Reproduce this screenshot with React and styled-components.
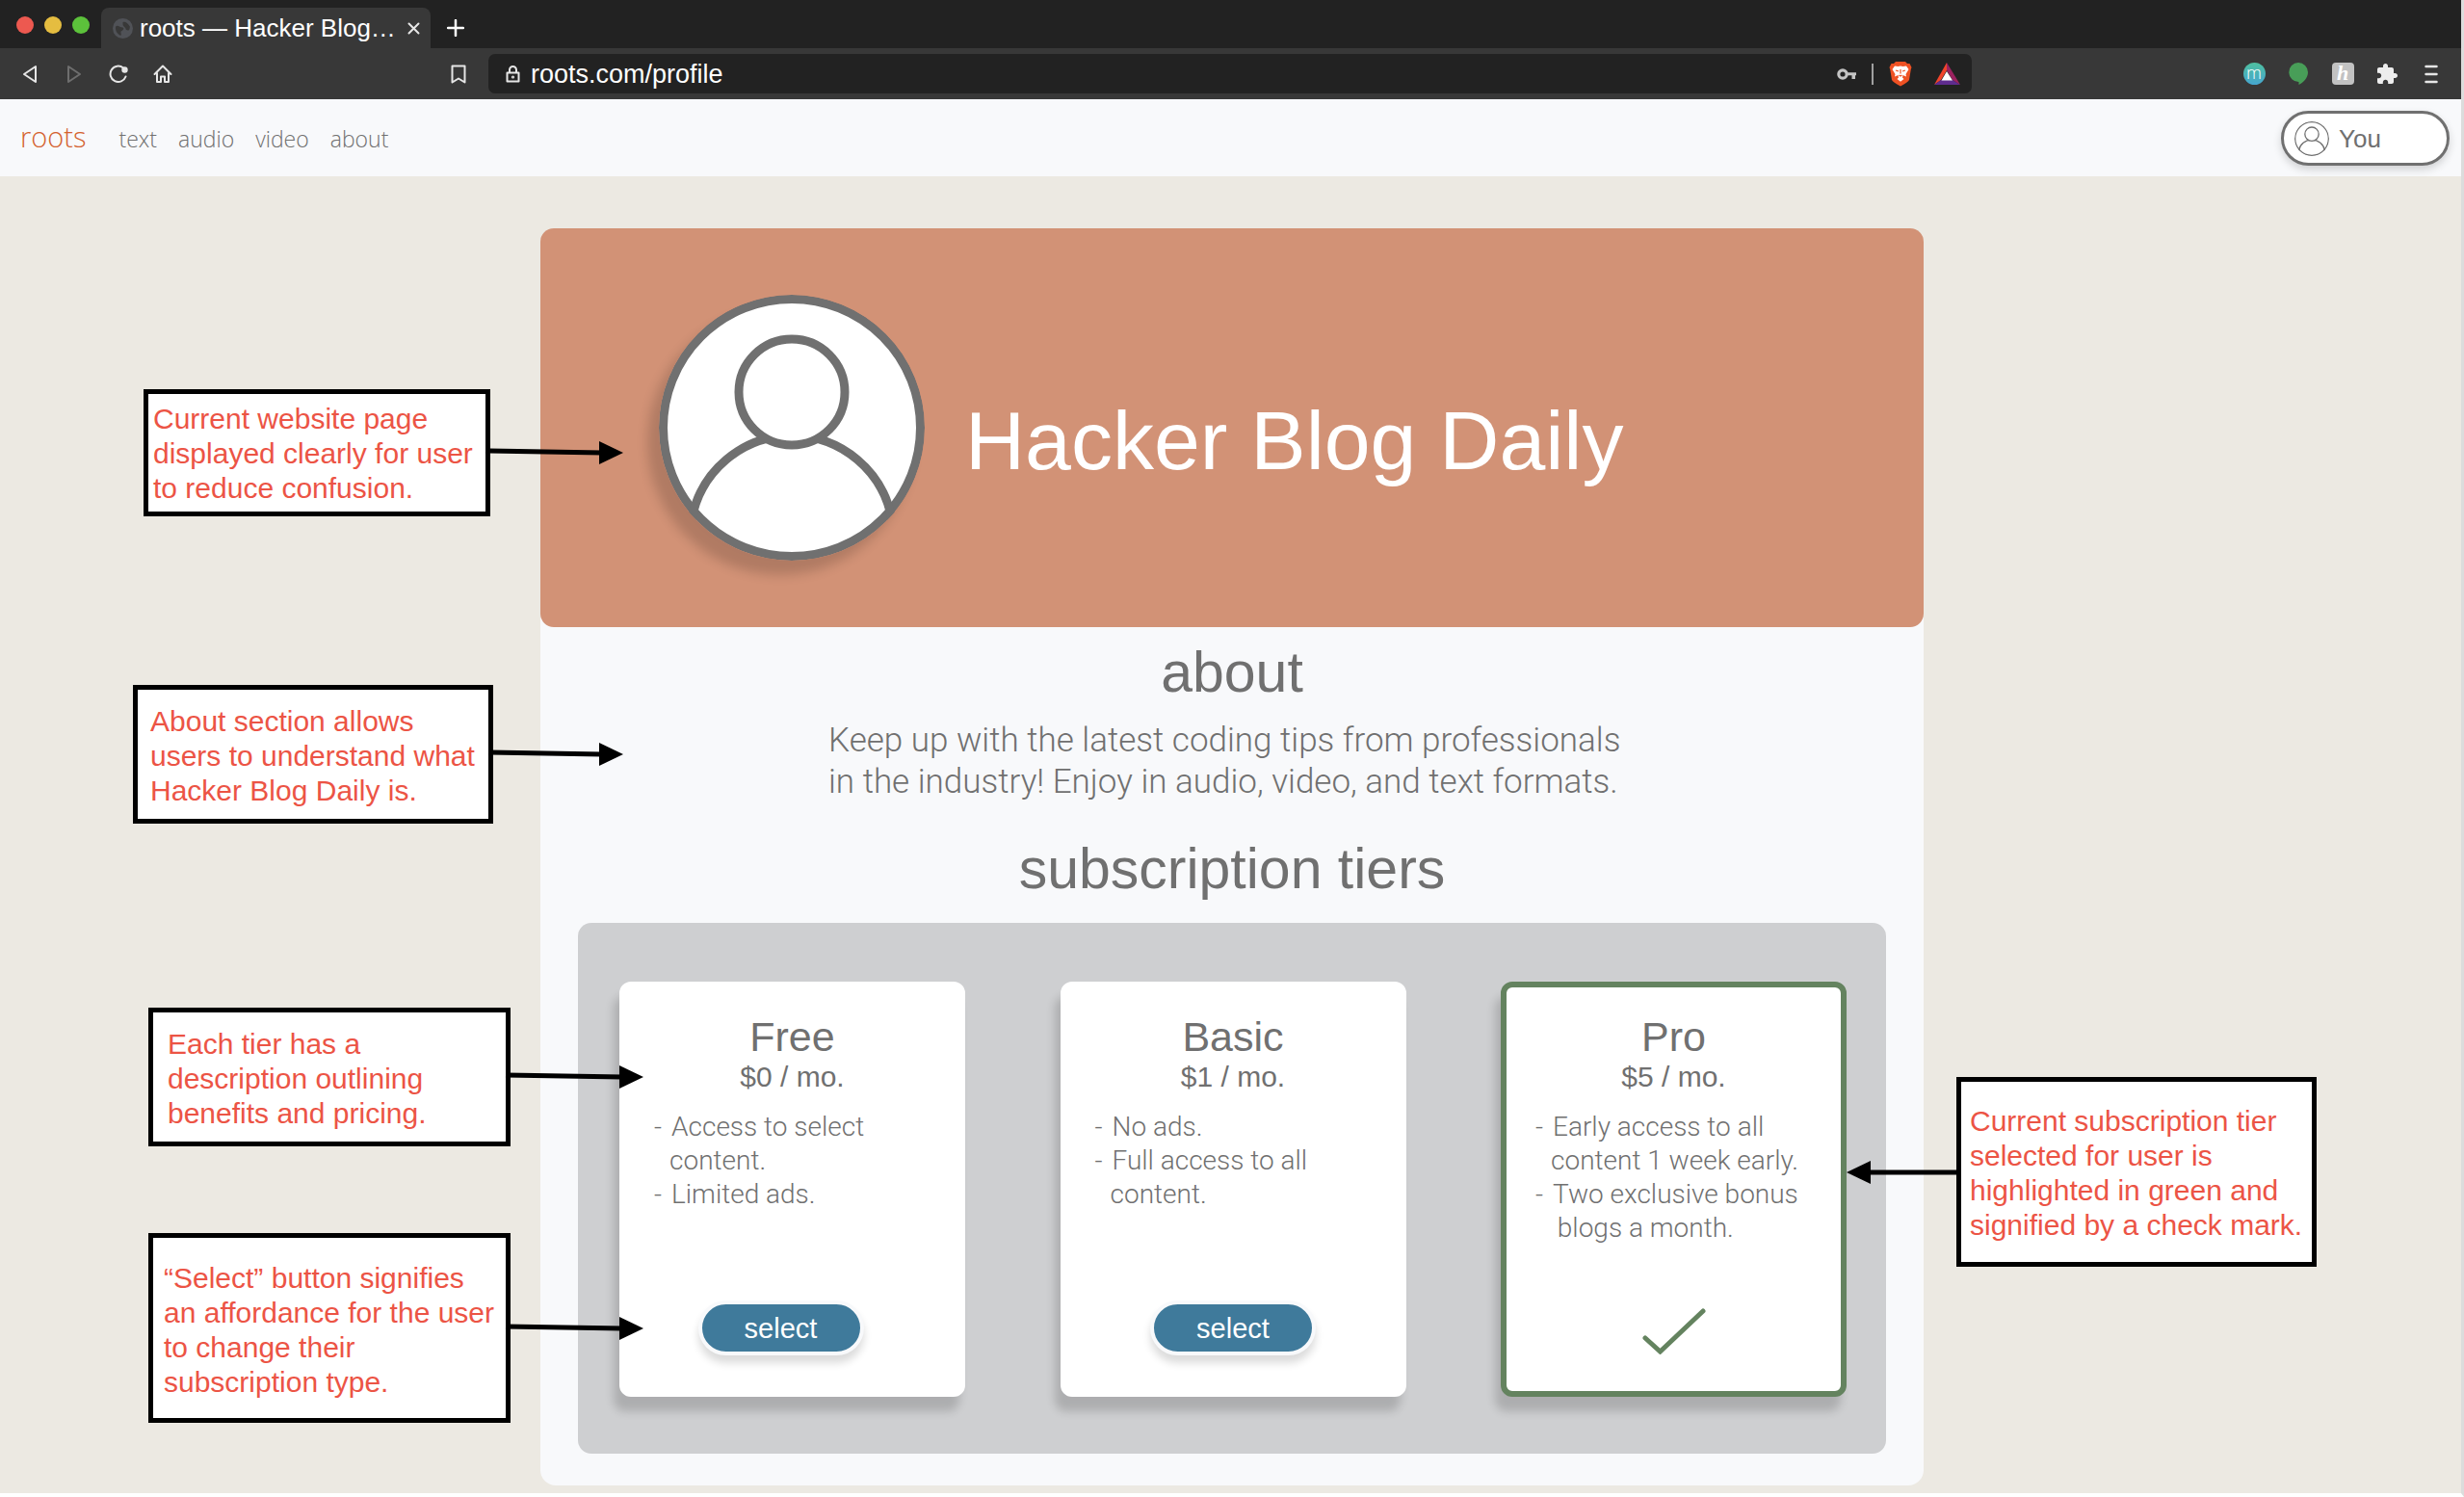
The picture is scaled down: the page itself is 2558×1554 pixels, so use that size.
import React from "react";
import styled, { createGlobalStyle, css } from "styled-components";

const sans = '"Liberation Sans", Arial, sans-serif';
const light = 'Roboto, "Liberation Sans", sans-serif';
const grey = "#707070";

const GlobalStyle = createGlobalStyle`
  *, *::before, *::after { box-sizing: border-box; }
  body { margin: 0; background: #ffffff; font-family: ${sans}; color: ${grey}; }
  h1, h2, h3, p, ul { margin: 0; padding: 0; font-weight: 400; }
  button { font: inherit; padding: 0; border: 0; background: none; cursor: pointer; }
`;

/* ---------- browser window ---------- */

const Window = styled.div`
  border-right: 3px solid #dcdcdc;
  border-bottom: 4px solid #ffffff;
  background: #ece9e2;
  overflow: hidden;
`;

const TabStrip = styled.div`
  display: flex;
  align-items: flex-end;
  height: 50px;
  background: #222222;
`;

const Lights = styled.div`
  display: flex;
  align-items: center;
  gap: 11px;
  width: 105px;
  height: 48px;
  padding-left: 17px;
`;

const Light = styled.button`
  width: 18px;
  height: 18px;
  border-radius: 50%;
  && { background: ${(p) => p.$color}; }
`;

const Tab = styled.div`
  display: flex;
  align-items: center;
  width: 342px;
  height: 42px;
  padding: 0 11px 0 12px;
  border-radius: 8px 8px 0 0;
  background: #383838;
  color: #ffffff;
  font-size: 26px;
  line-height: 32px;
`;

const TabTitle = styled.span`
  flex: 1;
  margin-left: 7px;
  white-space: nowrap;
`;

const TabButton = styled.button`
  display: flex;
  align-items: center;
  justify-content: center;
  width: ${(p) => p.$size}px;
  height: ${(p) => p.$size}px;
`;

const NewTab = styled(TabButton)`
  margin: 0 0 4px 9px;
`;

const Toolbar = styled.div`
  display: grid;
  grid-template-columns: 507px 1fr 508px;
  align-items: center;
  height: 53px;
  background: #383838;
`;

const ToolGroup = styled.div`
  display: flex;
  align-items: center;
  gap: 14px;
  padding: 0 15px;
`;

const ExtensionGroup = styled(ToolGroup)`
  justify-content: flex-end;
`;

const Tool = styled.button`
  display: flex;
  align-items: center;
  justify-content: center;
  width: 32px;
  height: 32px;
  ${(p) => p.$end && css`margin-left: auto;`}
`;

const AddressBar = styled.label`
  display: flex;
  align-items: center;
  height: 41px;
  padding: 0 12px 0 18px;
  border-radius: 7px;
  background: #222222;
`;

const AddressInput = styled.input`
  flex: 1;
  min-width: 0;
  padding: 0 0 0 11px;
  border: 0;
  outline: 0;
  background: none;
  color: #ffffff;
  font-family: ${sans};
  font-size: 27px;
  line-height: 32px;
`;

const AddressIcons = styled.div`
  display: flex;
  align-items: center;
  gap: 16px;
`;

const Divider = styled.span`
  width: 2px;
  height: 22px;
  background: #a0a0a0;
`;

const MBadge = styled.span`
  width: 23px;
  height: 23px;
  border-radius: 50%;
  background: linear-gradient(#4fc0a0, #46a6cf);
  color: #ffffff;
  font: 300 18px/21px "Open Sans", sans-serif;
`;

const HBadge = styled.span`
  width: 23px;
  height: 23px;
  border-radius: 4px;
  background: #c2c2c2;
  color: #ffffff;
  font: italic 700 22px/22px "Liberation Serif", serif;
`;

/* ---------- site navigation ---------- */

const SiteHeader = styled.header`
  display: flex;
  align-items: center;
  justify-content: space-between;
  height: 80px;
  padding: 0 12px 0 21px;
  background: #f8f9fb;
`;

const Nav = styled.nav`
  display: flex;
  align-items: baseline;
  gap: 22px;
  font-family: "Open Sans", sans-serif;
  font-weight: 300;
`;

const Brand = styled.a`
  margin-right: 12px;
  color: #d4622f;
  font-size: 29px;
  line-height: 40px;
  text-decoration: none;
`;

const NavLink = styled.a`
  color: ${grey};
  font-size: 23px;
  line-height: 40px;
  text-decoration: none;
`;

const Account = styled.button`
  && {
    display: flex;
    align-items: center;
    gap: 10px;
    width: 175px;
    height: 57px;
    padding: 2px 0 0 11px;
    border: 3px solid ${grey};
    border-radius: 29px;
    background: #ffffff;
    box-shadow: 0 4px 8px rgba(0, 0, 0, 0.16);
    color: ${grey};
    font-size: 26px;
    line-height: 32px;
  }
`;

/* ---------- profile ---------- */

const Main = styled.main`
  padding: 54px 0 8px 3px;
`;

const Profile = styled.article`
  position: relative;
  width: min(1436px, 92%);
  margin: 0 auto;
  padding-bottom: 33px;
  border-radius: 16px;
  background: #f8f9fb;
`;

const Banner = styled.header`
  display: flex;
  align-items: center;
  gap: 42px;
  height: 414px;
  padding-left: 123px;
  border-radius: 14px;
  background: #d29276;
`;

const Avatar = styled.div`
  width: 276px;
  height: 276px;
  border-radius: 50%;
  box-shadow: -12px 15px 12px rgba(0, 0, 0, 0.16);
`;

const Portrait = styled.svg`
  display: block;
  border-radius: 50%;
`;

const Title = styled.h1`
  padding-top: 26px;
  color: #ffffff;
  font-size: 86px;
  line-height: 96px;
`;

const SectionTitle = styled.h2`
  font-size: 59px;
  line-height: 64px;
  text-align: center;
`;

const About = styled.section`
  padding: 15px 0 37px;
`;

const Blurb = styled.p`
  width: 838px;
  margin: 17px auto 0;
  font-family: ${light};
  font-weight: 300;
  font-size: 35px;
  line-height: 43px;
`;

const Tiers = styled.div`
  display: flex;
  justify-content: space-between;
  margin: 24px 39px 0;
  padding: 61px 41px 59px 43px;
  border-radius: 14px;
  background: #cecfd1;
`;

const Tier = styled.section`
  display: flex;
  flex-direction: column;
  align-items: center;
  width: 359px;
  height: 431px;
  padding: 27px 30px 37px;
  border: 6px solid ${(p) => (p.$selected ? "#64835f" : "#ffffff")};
  border-radius: 12px;
  background: #ffffff;
  box-shadow: -6px 15px 10px rgba(0, 0, 0, 0.16);
`;

const TierName = styled.h3`
  font-size: 43px;
  line-height: 48px;
`;

const Price = styled.p`
  font-size: 30px;
  line-height: 36px;
`;

const Benefits = styled.ul`
  align-self: stretch;
  margin-top: 16px;
  list-style: none;
  font-family: ${light};
  font-weight: 300;
  font-size: 28px;
  line-height: 35px;
  white-space: pre;
`;

const Benefit = styled.li`
  padding-left: 16px;
`;

const Dash = styled.span`
  display: inline-block;
  width: 18px;
  margin-left: -16px;
`;

const Action = styled.div`
  display: flex;
  align-items: center;
  height: 57px;
  margin-top: auto;
  padding-right: ${(p) => p.$inset || 0}px;
`;

const Select = styled.button`
  && {
    width: 172px;
    height: 57px;
    border: 4px solid #f8f9fb;
    border-radius: 29px;
    background: #3f7a9b;
    box-shadow: 0 8px 8px rgba(0, 0, 0, 0.14);
    color: #ffffff;
    font-size: 29px;
    line-height: 36px;
  }
`;

/* ---------- annotations ---------- */

const Note = styled.aside`
  position: absolute;
  top: ${(p) => p.$top}px;
  ${(p) => (p.$side === "left" ? "right" : "left")}: calc(100% + ${(p) => p.$gap}px);
  width: ${(p) => p.$width}px;
  padding: ${(p) => p.$pad};
  border: 5px solid #000000;
  background: #ffffff;
  color: #ec5445;
  font-size: 30px;
  line-height: 36px;
  white-space: pre;
`;

const Arrow = styled.svg`
  position: absolute;
  top: calc(50% - 12px);
  ${(p) => (p.$side === "left" ? "left" : "right")}: 100%;
  overflow: visible;
`;

const notes = [
  { side: "left", top: 167, gap: 52, width: 360, pad: "8px 5px 6px", reach: 143, text: "Current website page\ndisplayed clearly for user\nto reduce confusion." },
  { side: "left", top: 474, gap: 49, width: 374, pad: "15px 13px 11px", reach: 140, text: "About section allows\nusers to understand what\nHacker Blog Daily is." },
  { side: "left", top: 809, gap: 31, width: 376, pad: "15px 14px 11px 15px", reach: 143, text: "Each tier has a\ndescription outlining\nbenefits and pricing." },
  { side: "left", top: 1043, gap: 31, width: 376, pad: "24px 10px 19px 11px", reach: 143, text: "“Select” button signifies\nan affordance for the user\nto change their\nsubscription type." },
  { side: "right", top: 881, gap: 34, width: 374, pad: "23px 9px 20px", reach: 119, text: "Current subscription tier\nselected for user is\nhighlighted in green and\nsignified by a check mark." },
];

const tiers = [
  { name: "Free", price: "$0 / mo.", lines: ["Access to select\ncontent.", "Limited ads."], inset: 24 },
  { name: "Basic", price: "$1 / mo.", lines: ["No ads.", "Full access to all\ncontent."] },
  { name: "Pro", price: "$5 / mo.", lines: ["Early access to all\ncontent 1 week early.", "Two exclusive bonus\n blogs a month."], selected: true },
];

function NoteArrow({ side, reach }) {
  const left = side === "left";
  return (
    <Arrow $side={side} width={reach} height="24" aria-hidden="true">
      {left ? (
        <>
          <path d={`M0 10L${reach - 22} 12`} stroke="#000" strokeWidth="5" />
          <path d={`M${reach - 25} 0L${reach} 12L${reach - 25} 24Z`} />
        </>
      ) : (
        <>
          <path d={`M${reach} 12H22`} stroke="#000" strokeWidth="5" />
          <path d="M25 0L0 12L25 24Z" />
        </>
      )}
    </Arrow>
  );
}

function Person({ size, stroke }) {
  return (
    <Portrait width={size} height={size} viewBox="0 0 276 276" fill="none" stroke={grey} strokeWidth={stroke} aria-hidden="true">
      <circle cx="138" cy="138" r={138 - stroke / 2} fill="#fff" />
      <path d="M34 234A105.500 105.500 0 0 1 242 234" />
      <circle cx="138" cy="101" r="55" fill="#fff" />
    </Portrait>
  );
}

const stroked = { fill: "none", stroke: "#e6e6e6", strokeWidth: 2, strokeLinejoin: "round", strokeLinecap: "round" };

export default function App() {
  return (
    <>
      <GlobalStyle />
      <Window>
        <TabStrip>
          <Lights>
            <Light $color="#ed5950" aria-label="Close window" />
            <Light $color="#e5bd40" aria-label="Minimise window" />
            <Light $color="#5cc23b" aria-label="Zoom window" />
          </Lights>
          <Tab>
            <svg width="21" height="21" viewBox="0 0 20 20" aria-hidden="true">
              <circle cx="10" cy="10" r="10" fill="#505257" />
              <path d="M3 8C5 6 7 9 10 9C12 10 10 12 8 13C8 15 9 16 8 17C5 16 2 12 3 8ZM10 4C12 3 14 4 17 8C17 12 15 13 13 11C13 9 10 8 10 6Z" fill="#383838" />
            </svg>
            <TabTitle>roots — Hacker Blog…</TabTitle>
            <TabButton $size={13} aria-label="Close tab">
              <svg width="13" height="13" viewBox="0 0 13 13" {...stroked}><path d="M1.500 1.500L11.500 11.500M11.500 1.500L1.500 11.500" /></svg>
            </TabButton>
          </Tab>
          <NewTab $size={34} aria-label="New tab">
            <svg width="18" height="18" viewBox="0 0 18 18" {...stroked} stroke="#fff" strokeWidth="2.500"><path d="M9 1V17M1 9H17" /></svg>
          </NewTab>
        </TabStrip>
        <Toolbar>
          <ToolGroup>
            <Tool aria-label="Back"><svg width="16" height="20" viewBox="0 0 16 20" {...stroked}><path d="M14 2V18L2 10Z" /></svg></Tool>
            <Tool aria-label="Forward"><svg width="16" height="20" viewBox="0 0 16 20" {...stroked} stroke="#6e6e6e"><path d="M2 2V18L14 10Z" /></svg></Tool>
            <Tool aria-label="Reload"><svg width="20" height="20" viewBox="0 0 20 20" {...stroked}><path d="M17.500 12.500A8.200 8.200 0 1 1 15 3.500" /><circle cx="16.500" cy="5.500" r="2.200" fill="#e6e6e6" /></svg></Tool>
            <Tool aria-label="Home"><svg width="20" height="20" viewBox="0 0 20 20" {...stroked}><path d="M1.500 10L10 1.500L18.500 10M4 8.500V18H8V12.500H12V18H16V8.500" /></svg></Tool>
            <Tool $end aria-label="Bookmark"><svg width="16" height="20" viewBox="0 0 16 20" {...stroked}><path d="M1.500 1.500H14.500V18.500L8 14.500L1.500 18.500Z" /></svg></Tool>
          </ToolGroup>
          <AddressBar>
            <svg width="15" height="18" viewBox="0 0 15 18" {...stroked} aria-hidden="true"><path d="M1.500 7.500H13.500V16.500H1.500ZM4 7.500V4.500A3.500 3.500 0 0 1 11 4.500V7.500" /><circle cx="7.500" cy="12" r="0.600" /></svg>
            <AddressInput type="text" aria-label="Address" defaultValue="roots.com/profile" />
            <AddressIcons>
              <svg width="20" height="14" viewBox="0 0 20 14" aria-hidden="true"><circle cx="6" cy="7" r="4.200" fill="none" stroke="#c4c4c4" strokeWidth="3.200" /><path d="M10 5.300H20V8.300H19V12H15.500V8.300H10Z" fill="#c4c4c4" /></svg>
              <Divider />
              <svg width="24" height="27" viewBox="0 0 24 27" aria-hidden="true">
                <path d="M7 1H17L19 3L21.500 3L23.500 7L22.800 9L21 20Q20 22 12 26.500Q4 22 3 20L1.200 9L0.500 7L2.500 3L5 3Z" fill="#ee5123" />
                <path d="M6 5.500L9.500 6L12 5.500L14.500 6L18 5.500L20.500 9L17.500 14L18 16.500L14.500 15L14 17.500L15.500 19L12 21.800L8.500 19L10 17.500L9.500 15L6 16.500L6.500 14L3.500 9Z" fill="#fff" />
                <path d="M7 10L10 11M17 10L14 11M12 9V13.500M10.500 15L12 16L13.500 15" stroke="#ee5123" strokeWidth="1.200" fill="none" />
              </svg>
              <svg width="34" height="23" viewBox="-7 0 34 23" aria-hidden="true">
                <path d="M13 0L0 23L7 18L13 8Z" fill="#f0442b" />
                <path d="M13 0L27 23L19 18L13 8Z" fill="#9b2260" />
                <path d="M0 23H27L19 18H7Z" fill="#5f2c8f" />
                <path d="M13 9L19 18.500H7.500Z" fill="#fff" />
              </svg>
            </AddressIcons>
          </AddressBar>
          <ExtensionGroup>
            <Tool aria-label="Momentum"><MBadge>m</MBadge></Tool>
            <Tool aria-label="Hangouts"><svg width="20" height="23" viewBox="0 0 20 23"><path d="M10 0A10 10 0 0 1 20 10C20 16 15 21 10.500 23V20A10 10 0 0 1 10 0Z" fill="#489e58" /></svg></Tool>
            <Tool aria-label="Honey"><HBadge>h</HBadge></Tool>
            <Tool aria-label="Extensions"><svg width="24" height="24" viewBox="0 0 24 24" fill="#ededed"><path d="M20.500 11H19V7c0-1.100-.9-2-2-2h-4V3.500C13 2.120 11.880 1 10.500 1S8 2.120 8 3.500V5H4c-1.100 0-1.990.9-1.990 2v3.800H3.500c1.490 0 2.700 1.210 2.700 2.700s-1.210 2.700-2.700 2.700H2V20c0 1.100.9 2 2 2h3.800v-1.500c0-1.490 1.210-2.700 2.700-2.700 1.490 0 2.700 1.210 2.700 2.700V22H17c1.100 0 2-.9 2-2v-4h1.500c1.380 0 2.500-1.120 2.500-2.500S21.880 11 20.500 11z" /></svg></Tool>
            <Tool aria-label="Menu"><svg width="14" height="20" viewBox="0 0 14 20" {...stroked} strokeWidth="2.500"><path d="M1.500 2H12.500M1.500 10H12.500M1.500 18H12.500" /></svg></Tool>
          </ExtensionGroup>
        </Toolbar>

        <SiteHeader>
          <Nav>
            <Brand href="#home">roots</Brand>
            <NavLink href="#text">text</NavLink>
            <NavLink href="#audio">audio</NavLink>
            <NavLink href="#video">video</NavLink>
            <NavLink href="#about">about</NavLink>
          </Nav>
          <Account><Person size={36} stroke={10} />You</Account>
        </SiteHeader>

        <Main>
          <Profile>
            <Banner>
              <Avatar><Person size={276} stroke={9} /></Avatar>
              <Title>Hacker Blog Daily</Title>
            </Banner>
            <About id="about">
              <SectionTitle>about</SectionTitle>
              <Blurb>
                Keep up with the latest coding tips from professionals<br />
                in the industry! Enjoy in audio, video, and text formats.
              </Blurb>
            </About>
            <section>
              <SectionTitle>subscription tiers</SectionTitle>
              <Tiers>
                {tiers.map((t) => (
                  <Tier key={t.name} $selected={t.selected}>
                    <TierName>{t.name}</TierName>
                    <Price>{t.price}</Price>
                    <Benefits>
                      {t.lines.map((line) => (
                        <Benefit key={line}><Dash>-</Dash>{line}</Benefit>
                      ))}
                    </Benefits>
                    <Action $inset={t.inset}>
                      {t.selected ? (
                        <svg width="68" height="54" viewBox="0 0 68 54" role="img" aria-label="Current tier" fill="none" stroke="#64835f" strokeWidth="5" strokeLinecap="round">
                          <path d="M4 37L19.500 51L64 9" />
                        </svg>
                      ) : (
                        <Select>select</Select>
                      )}
                    </Action>
                  </Tier>
                ))}
              </Tiers>
            </section>
            {notes.map((n) => (
              <Note key={n.top} $side={n.side} $top={n.top} $gap={n.gap} $width={n.width} $pad={n.pad}>
                {n.text}
                <NoteArrow side={n.side} reach={n.reach} />
              </Note>
            ))}
          </Profile>
        </Main>
      </Window>
    </>
  );
}
